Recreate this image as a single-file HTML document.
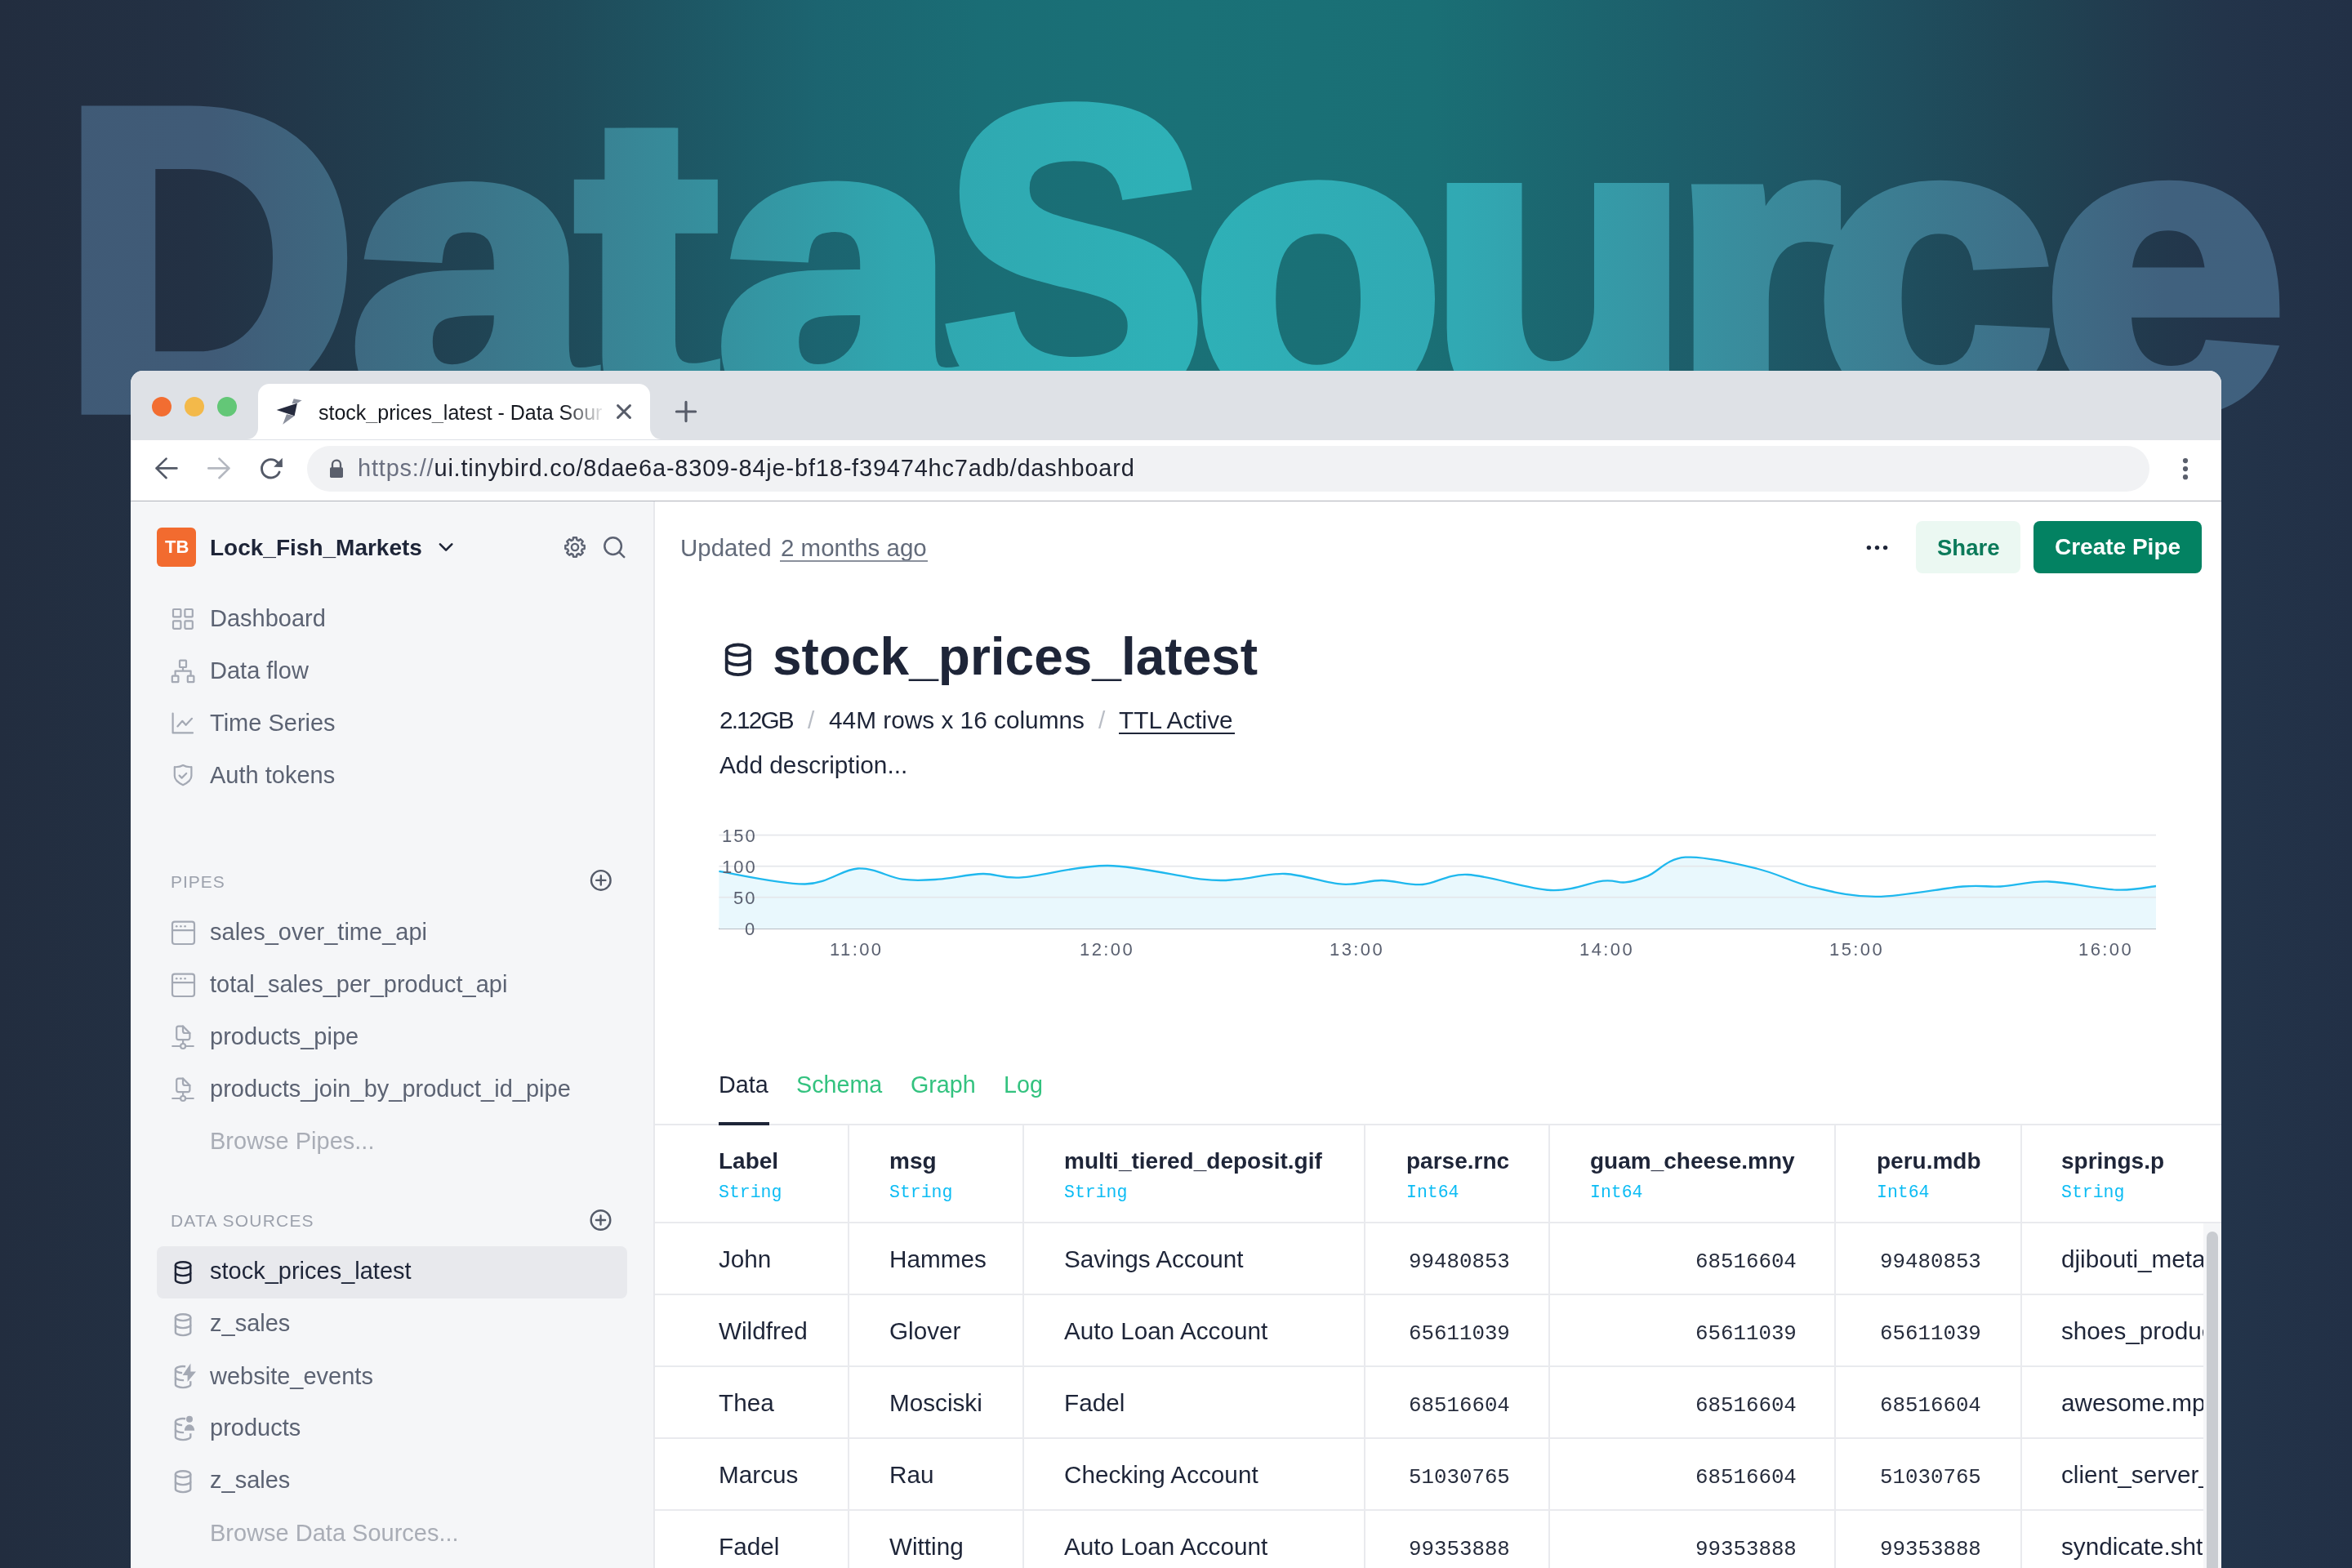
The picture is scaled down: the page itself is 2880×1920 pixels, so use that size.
<!DOCTYPE html>
<html><head><meta charset="utf-8">
<style>
html,body{margin:0;padding:0}
body{width:2880px;height:1920px;overflow:hidden;position:relative;font-family:"Liberation Sans",sans-serif;
background:linear-gradient(90deg,#222d3f 0px,#233144 240px,#213f50 500px,#1f4b5a 700px,#1c6470 1000px,#1a6d75 1200px,#1a7177 1450px,#1a6f75 1750px,#1c646e 1950px,#1e5a68 2150px,#1f4e5e 2330px,#204353 2500px,#22384c 2650px,#23344a 2720px,#223046 2880px);}
.a{position:absolute}
.t{position:absolute;white-space:pre;line-height:1;will-change:transform}
svg{position:absolute;overflow:visible}
#win{position:absolute;left:160px;top:454px;width:2560px;height:1466px;border-radius:15px 15px 0 0;overflow:hidden;background:#fff}
#inner{position:absolute;left:-160px;top:-454px;width:2880px;height:1920px}
</style></head>
<body>

<svg width="2880" height="1920" style="left:0;top:0"><defs><linearGradient id="bg1" gradientUnits="userSpaceOnUse" x1="0" y1="0" x2="2880" y2="0"><stop offset="0" stop-color="#405a76"/><stop offset="0.09" stop-color="#405b77"/><stop offset="0.24" stop-color="#3a7e90"/><stop offset="0.38" stop-color="#30a6af"/><stop offset="0.5" stop-color="#2eb1b7"/><stop offset="0.62" stop-color="#31a9b3"/><stop offset="0.75" stop-color="#3a8a9b"/><stop offset="0.92" stop-color="#40617e"/><stop offset="1" stop-color="#40607e"/></linearGradient><mask id="bm" maskUnits="userSpaceOnUse" x="0" y="0" width="2880" height="1920"><g fill="#fff" font-family="Liberation Sans" font-weight="bold" font-size="549"><text transform="translate(75.41,498.00) scale(0.9118,0.9497)" x="0" y="0" stroke="#fff" stroke-width="20.41" stroke-linejoin="miter">D</text><text transform="translate(429.04,498.00) scale(0.9611,0.9032)" x="0" y="0" stroke="#fff" stroke-width="20.38" stroke-linejoin="miter">a</text><text transform="translate(706.07,498.00) scale(0.9438,0.9267)" x="0" y="0" stroke="#fff" stroke-width="20.31" stroke-linejoin="miter">t</text><text transform="translate(877.44,498.00) scale(0.9615,0.9048)" x="0" y="0" stroke="#fff" stroke-width="20.36" stroke-linejoin="miter">a</text><text transform="translate(1154.50,498.00) scale(0.8789,0.9490)" x="0" y="0" stroke="#fff" stroke-width="20.79" stroke-linejoin="miter">S</text><text transform="translate(1460.92,498.00) scale(0.9129,0.9079)" x="0" y="0" stroke="#fff" stroke-width="20.87" stroke-linejoin="miter">o</text><text transform="translate(1748.68,498.00) scale(0.9611,0.9126)" x="0" y="0" stroke="#fff" stroke-width="20.28" stroke-linejoin="miter">u</text><text transform="translate(2046.55,498.00) scale(0.9631,0.9081)" x="0" y="0" stroke="#fff" stroke-width="20.31" stroke-linejoin="miter">r</text><text transform="translate(2222.82,498.00) scale(0.9552,0.9072)" x="0" y="0" stroke="#fff" stroke-width="20.40" stroke-linejoin="miter">c</text><text transform="translate(2501.87,498.00) scale(0.9758,0.9072)" x="0" y="0" stroke="#fff" stroke-width="20.18" stroke-linejoin="miter">e</text><rect x="740.4" y="156.6" width="89.9" height="80"/></g></mask></defs><rect x="0" y="0" width="2880" height="600" fill="url(#bg1)" mask="url(#bm)"/></svg>
<div id="win"><div id="inner">
<div class="a" style="left:160.00px;top:454.00px;width:2560.00px;height:84.50px;background:#dee1e6;"></div>
<div class="a" style="left:186px;top:486px;width:24px;height:24px;border-radius:50%;background:#f26d31"></div>
<div class="a" style="left:225.7px;top:486px;width:24px;height:24px;border-radius:50%;background:#f3b94a"></div>
<div class="a" style="left:265.8px;top:486px;width:24px;height:24px;border-radius:50%;background:#63c777"></div>
<svg width="2880" height="1920" style="left:0;top:0"><path d="M302,538 A14,14 0 0 0 316,524 L316,484 A14,14 0 0 1 330,470 L782,470 A14,14 0 0 1 796,484 L796,524 A14,14 0 0 0 810,538 Z" fill="#fff"/><polygon points="338.7,502 363.9,493.7 360.6,509.2" fill="#252a3d"/><polygon points="359.7,488.2 369.6,490.2 363.9,493.7 357.5,494.3" fill="#8a8f9c"/><polygon points="350.9,507.3 360.6,509.2 346.2,519.7" fill="#8a8f9c"/><path d="M756.6,496.6 L771.4,511.4 M771.4,496.6 L756.6,511.4" stroke="#575c69" stroke-width="3" stroke-linecap="round"/><path d="M828.4,504 L851.6,504 M840,492.4 L840,515.6" stroke="#575c69" stroke-width="3.2" stroke-linecap="round"/></svg>
<div class="t" style="left:389.80px;top:493.03px;font-size:25px;color:#15181f;font-weight:normal;font-family:'Liberation Sans',sans-serif;-webkit-mask-image:linear-gradient(90deg,#000 0px,#000 300px,rgba(0,0,0,0.05) 350px);mask-image:linear-gradient(90deg,#000 0px,#000 300px,rgba(0,0,0,0.05) 350px);">stock_prices_latest - Data Sour</div>
<div class="a" style="left:160.00px;top:538.50px;width:2560.00px;height:74.50px;background:#fff;"></div>
<div class="a" style="left:160.00px;top:612.70px;width:2560.00px;height:1.40px;background:#b0b3ba;"></div>
<div class="a" style="left:376px;top:546px;width:2256px;height:56px;border-radius:28px;background:#f1f2f4"></div>
<svg width="2880" height="1920" style="left:0;top:0"><path d="M191.5,573.4 L216.4,573.4 M203.6,561.6 L191.5,573.4 L203.6,585.2" stroke="#535967" stroke-width="2.6" fill="none" stroke-linecap="round" stroke-linejoin="round"/><path d="M255.3,573.4 L280.5,573.4 M268.4,561.6 L280.5,573.4 L268.4,585.2" stroke="#b4b8c0" stroke-width="2.6" fill="none" stroke-linecap="round" stroke-linejoin="round"/><path d="M340.15,566.45 A11.2,11.2 0 1 0 342.08,578.0" stroke="#535967" stroke-width="2.9" fill="none" stroke-linecap="round"/><polygon points="345.7,560.8 345.9,572 335.2,571.8" fill="#535967"/><rect x="404" y="572.3" width="16" height="12.6" rx="1.6" fill="#5a5f6c"/><path d="M407,573 V568.6 A5,5 0 0 1 417,568.6 V573" stroke="#5a5f6c" stroke-width="2.3" fill="none"/><circle cx="2676" cy="564.1" r="3.1" fill="#5a5f6c"/><circle cx="2676" cy="574.1" r="3.1" fill="#5a5f6c"/><circle cx="2676" cy="584.2" r="3.1" fill="#5a5f6c"/></svg>
<div class="t" style="left:438.30px;top:559.45px;font-size:29px;color:#1f2330;font-weight:normal;font-family:'Liberation Sans',sans-serif;letter-spacing:0.8px;"><span style="color:#6b7080">https://</span>ui.tinybird.co/8dae6a-8309-84je-bf18-f39474hc7adb/dashboard</div>
<div class="a" style="left:160.00px;top:614.10px;width:640.00px;height:1305.90px;background:#f5f6f8;"></div>
<div class="a" style="left:800.00px;top:614.10px;width:2.00px;height:1305.90px;background:#e7e8ec;"></div>
<div class="a" style="left:192px;top:645.7px;width:48px;height:48px;border-radius:6px;background:#f26b2f"></div>
<div class="t" style="left:201.50px;top:659.07px;font-size:22px;color:#fff;font-weight:bold;font-family:'Liberation Sans',sans-serif;">TB</div>
<div class="t" style="left:256.80px;top:657.09px;font-size:28px;color:#1e2538;font-weight:bold;font-family:'Liberation Sans',sans-serif;">Lock_Fish_Markets</div>
<div class="t" style="left:256.80px;top:743.45px;font-size:29px;color:#5c6373;font-weight:normal;font-family:'Liberation Sans',sans-serif;">Dashboard</div>
<div class="t" style="left:256.80px;top:807.45px;font-size:29px;color:#5c6373;font-weight:normal;font-family:'Liberation Sans',sans-serif;">Data flow</div>
<div class="t" style="left:256.80px;top:871.45px;font-size:29px;color:#5c6373;font-weight:normal;font-family:'Liberation Sans',sans-serif;">Time Series</div>
<div class="t" style="left:256.80px;top:935.45px;font-size:29px;color:#5c6373;font-weight:normal;font-family:'Liberation Sans',sans-serif;">Auth tokens</div>
<div class="t" style="left:208.50px;top:1068.52px;font-size:21px;color:#9ca1ac;font-weight:normal;font-family:'Liberation Sans',sans-serif;letter-spacing:1.0px;">PIPES</div>
<div class="t" style="left:256.80px;top:1127.45px;font-size:29px;color:#5c6373;font-weight:normal;font-family:'Liberation Sans',sans-serif;">sales_over_time_api</div>
<div class="t" style="left:256.80px;top:1191.45px;font-size:29px;color:#5c6373;font-weight:normal;font-family:'Liberation Sans',sans-serif;">total_sales_per_product_api</div>
<div class="t" style="left:256.80px;top:1255.45px;font-size:29px;color:#5c6373;font-weight:normal;font-family:'Liberation Sans',sans-serif;">products_pipe</div>
<div class="t" style="left:256.80px;top:1319.45px;font-size:29px;color:#5c6373;font-weight:normal;font-family:'Liberation Sans',sans-serif;">products_join_by_product_id_pipe</div>
<div class="t" style="left:256.80px;top:1383.05px;font-size:29px;color:#a9adb6;font-weight:normal;font-family:'Liberation Sans',sans-serif;">Browse Pipes...</div>
<div class="t" style="left:209.00px;top:1484.22px;font-size:21px;color:#9ca1ac;font-weight:normal;font-family:'Liberation Sans',sans-serif;letter-spacing:1.2px;">DATA SOURCES</div>
<div class="a" style="left:192px;top:1526px;width:576px;height:63.5px;border-radius:8px;background:#e8e9ed"></div>
<div class="t" style="left:256.80px;top:1542.45px;font-size:29px;color:#1e2538;font-weight:normal;font-family:'Liberation Sans',sans-serif;">stock_prices_latest</div>
<div class="t" style="left:256.80px;top:1606.45px;font-size:29px;color:#5c6373;font-weight:normal;font-family:'Liberation Sans',sans-serif;">z_sales</div>
<div class="t" style="left:256.80px;top:1671.05px;font-size:29px;color:#5c6373;font-weight:normal;font-family:'Liberation Sans',sans-serif;">website_events</div>
<div class="t" style="left:256.80px;top:1734.45px;font-size:29px;color:#5c6373;font-weight:normal;font-family:'Liberation Sans',sans-serif;">products</div>
<div class="t" style="left:256.80px;top:1798.45px;font-size:29px;color:#5c6373;font-weight:normal;font-family:'Liberation Sans',sans-serif;">z_sales</div>
<div class="t" style="left:256.80px;top:1862.95px;font-size:29px;color:#a9adb6;font-weight:normal;font-family:'Liberation Sans',sans-serif;">Browse Data Sources...</div>
<svg width="2880" height="1920" style="left:0;top:0"><path d="M538.9,666.4 L546.1,673.6 L553.3,666.4" stroke="#1e2436" stroke-width="2.6" fill="none" stroke-linecap="round" stroke-linejoin="round"/><path d="M712.89,667.62 L715.72,667.93 L715.72,672.07 L712.89,672.38 L711.97,674.60 L713.75,676.83 L710.83,679.75 L708.60,677.97 L706.38,678.89 L706.07,681.72 L701.93,681.72 L701.62,678.89 L699.40,677.97 L697.17,679.75 L694.25,676.83 L696.03,674.60 L695.11,672.38 L692.28,672.07 L692.28,667.93 L695.11,667.62 L696.03,665.40 L694.25,663.17 L697.17,660.25 L699.40,662.03 L701.62,661.11 L701.93,658.28 L706.07,658.28 L706.38,661.11 L708.60,662.03 L710.83,660.25 L713.75,663.17 L711.97,665.40 Z" stroke="#5c6272" stroke-width="2.4" fill="none" stroke-linejoin="round"/><circle cx="704" cy="670" r="4.1" stroke="#5c6272" stroke-width="2.4" fill="none"/><circle cx="750.6" cy="668.6" r="10.3" stroke="#5c6272" stroke-width="2.5" fill="none"/><path d="M758.2,676.2 L764.2,682.2" stroke="#5c6272" stroke-width="2.5" stroke-linecap="round"/><g stroke="#a4a9b4" stroke-width="2.2" fill="none" stroke-linejoin="round" stroke-linecap="round"><rect x="212" y="746" width="9.4" height="9.4" rx="1"/><rect x="226.4" y="746" width="9.4" height="9.4" rx="1"/><rect x="212" y="760.4" width="9.4" height="9.4" rx="1"/><rect x="226.4" y="760.4" width="9.4" height="9.4" rx="1"/><rect x="220" y="808.6" width="8" height="8.4" rx="0.8"/><path d="M224,817 V821.6 M214.6,826.6 V821.6 H233.6 V826.6"/><rect x="210.8" y="827.6" width="7.6" height="7.6" rx="0.8"/><rect x="229.8" y="827.6" width="7.6" height="7.6" rx="0.8"/><path d="M211.6,873.6 V897.4 H236"/><path d="M217.4,889.4 L223.3,882.8 L227.6,887.8 L235,879.8"/><path d="M213.8,939.2 Q220,939.6 224.1,937 Q228.2,939.6 234.4,939.2 V950 Q234.4,956.4 224.1,961.2 Q213.8,956.4 213.8,950 Z"/><path d="M219.6,949.6 L222.6,952.6 L228.2,947"/></g><circle cx="735.8" cy="1077.9" r="11.8" stroke="#555b69" stroke-width="2.4" fill="none"/><path d="M730.1999999999999,1077.9 H741.4 M735.8,1072.3000000000002 V1083.5" stroke="#555b69" stroke-width="2.4" stroke-linecap="round"/><g stroke="#a4a9b4" stroke-width="2.2" fill="none" stroke-linejoin="round" stroke-linecap="round"><rect x="211" y="1128.6" width="27" height="27.4" rx="3"/><path d="M211,1139.1999999999998 H238"/></g><g fill="#a4a9b4"><circle cx="216.2" cy="1134.1999999999998" r="1.3"/><circle cx="221.4" cy="1134.1999999999998" r="1.3"/><circle cx="226.6" cy="1134.1999999999998" r="1.3"/></g><g stroke="#a4a9b4" stroke-width="2.2" fill="none" stroke-linejoin="round" stroke-linecap="round"><rect x="211" y="1192.6" width="27" height="27.4" rx="3"/><path d="M211,1203.1999999999998 H238"/></g><g fill="#a4a9b4"><circle cx="216.2" cy="1198.1999999999998" r="1.3"/><circle cx="221.4" cy="1198.1999999999998" r="1.3"/><circle cx="226.6" cy="1198.1999999999998" r="1.3"/></g><g stroke="#a4a9b4" stroke-width="2.2" fill="none" stroke-linejoin="round" stroke-linecap="round"><path d="M216.2,1259.1 Q216.2,1256.6 218.7,1256.6 H224 L232.4,1265.0 V1270.6 Q232.4,1273.1999999999998 229.8,1273.1999999999998 H218.7 Q216.2,1273.1999999999998 216.2,1270.6 Z"/><path d="M224,1256.6 V1262.1999999999998 Q224,1265.0 226.8,1265.0 H232.4"/><path d="M224.1,1273.1999999999998 V1278.0 M211.2,1281.0 H221 M227.2,1281.0 H236.8"/><circle cx="224.1" cy="1281.0" r="3"/></g><g stroke="#a4a9b4" stroke-width="2.2" fill="none" stroke-linejoin="round" stroke-linecap="round"><path d="M216.2,1323.1 Q216.2,1320.6 218.7,1320.6 H224 L232.4,1329.0 V1334.6 Q232.4,1337.1999999999998 229.8,1337.1999999999998 H218.7 Q216.2,1337.1999999999998 216.2,1334.6 Z"/><path d="M224,1320.6 V1326.1999999999998 Q224,1329.0 226.8,1329.0 H232.4"/><path d="M224.1,1337.1999999999998 V1342.0 M211.2,1345.0 H221 M227.2,1345.0 H236.8"/><circle cx="224.1" cy="1345.0" r="3"/></g><circle cx="735.5" cy="1494" r="11.8" stroke="#555b69" stroke-width="2.4" fill="none"/><path d="M729.9,1494 H741.1 M735.5,1488.4 V1499.6" stroke="#555b69" stroke-width="2.4" stroke-linecap="round"/><g stroke="#1e2436" stroke-width="2.4" fill="none"><ellipse cx="224.1" cy="1549.2" rx="9.2" ry="3.9"/><path d="M214.9,1549.2 V1567.2 A9.2,3.9 0 0 0 233.29999999999998,1567.2 V1549.2"/><path d="M214.9,1558.2 A9.2,3.9 0 0 0 233.29999999999998,1558.2"/></g><g stroke="#a4a9b4" stroke-width="2.4" fill="none"><ellipse cx="224.1" cy="1613.2" rx="9.2" ry="3.9"/><path d="M214.9,1613.2 V1631.2 A9.2,3.9 0 0 0 233.29999999999998,1631.2 V1613.2"/><path d="M214.9,1622.2 A9.2,3.9 0 0 0 233.29999999999998,1622.2"/></g><g stroke="#a4a9b4" stroke-width="2.4" fill="none"><path d="M227.1,1673.3 A9.2,3.9 0 0 0 214.9,1677.2 A9.2,3.9 0 0 0 223.1,1681.1000000000001"/><path d="M214.9,1677.2 V1695.2 A9.2,3.9 0 0 0 233.29999999999998,1695.2 V1691.2"/><path d="M214.9,1686.2 A9.2,3.9 0 0 0 225.1,1690.1000000000001"/></g><polygon points="233.4,1669.6 233.4,1679.6 240,1679.6 229.6,1692 229.6,1684 223.6,1684" fill="#a4a9b4"/><g stroke="#a4a9b4" stroke-width="2.4" fill="none"><path d="M227.1,1737.3 A9.2,3.9 0 0 0 214.9,1741.2 A9.2,3.9 0 0 0 223.1,1745.1000000000001"/><path d="M214.9,1741.2 V1759.2 A9.2,3.9 0 0 0 233.29999999999998,1759.2 V1755.2"/><path d="M214.9,1750.2 A9.2,3.9 0 0 0 225.1,1754.1000000000001"/></g><circle cx="232" cy="1737.8" r="4" fill="#a4a9b4"/><path d="M225.8,1751.8 A6.2,7.6 0 0 1 238.2,1751.8 Z" fill="#a4a9b4"/><g stroke="#a4a9b4" stroke-width="2.4" fill="none"><ellipse cx="224.1" cy="1805.2" rx="9.2" ry="3.9"/><path d="M214.9,1805.2 V1823.2 A9.2,3.9 0 0 0 233.29999999999998,1823.2 V1805.2"/><path d="M214.9,1814.2 A9.2,3.9 0 0 0 233.29999999999998,1814.2"/></g></svg>
<div class="t" style="left:833.00px;top:655.62px;font-size:29.5px;color:#636b7a;font-weight:normal;font-family:'Liberation Sans',sans-serif;">Updated </div>
<div class="t" style="left:955.80px;top:655.62px;font-size:29.5px;color:#636b7a;font-weight:normal;font-family:'Liberation Sans',sans-serif;">2 months ago</div>
<div class="a" style="left:954.80px;top:685.80px;width:180.90px;height:1.80px;background:#8a909c;"></div>
<div class="a" style="left:2346.3px;top:638px;width:127.5px;height:64px;border-radius:8px;background:#ebf8f2"></div>
<div class="t" style="left:2371.80px;top:656.92px;font-size:27.5px;color:#0b7a5a;font-weight:bold;font-family:'Liberation Sans',sans-serif;">Share</div>
<div class="a" style="left:2490.2px;top:638px;width:205.8px;height:64px;border-radius:8px;background:#038262"></div>
<div class="t" style="left:2515.70px;top:656.49px;font-size:28px;color:#fff;font-weight:bold;font-family:'Liberation Sans',sans-serif;">Create Pipe</div>
<div class="t" style="left:946.00px;top:771.81px;font-size:64px;color:#1e2538;font-weight:bold;font-family:'Liberation Sans',sans-serif;">stock_prices_latest</div>
<div class="t" style="left:881.00px;top:866.57px;font-size:29.8px;color:#1e2538;font-weight:normal;font-family:'Liberation Sans',sans-serif;letter-spacing:-1.9px;">2.12GB</div>
<div class="t" style="left:989.00px;top:866.57px;font-size:29.8px;color:#b9bdc5;font-weight:normal;font-family:'Liberation Sans',sans-serif;">/</div>
<div class="t" style="left:1015.00px;top:866.57px;font-size:29.8px;color:#1e2538;font-weight:normal;font-family:'Liberation Sans',sans-serif;">44M rows x 16 columns</div>
<div class="t" style="left:1345.00px;top:866.57px;font-size:29.8px;color:#b9bdc5;font-weight:normal;font-family:'Liberation Sans',sans-serif;">/</div>
<div class="t" style="left:1370.40px;top:866.57px;font-size:29.8px;color:#1e2538;font-weight:normal;font-family:'Liberation Sans',sans-serif;">TTL Active</div>
<div class="a" style="left:1370.40px;top:897.20px;width:141.20px;height:1.80px;background:#1e2538;"></div>
<div class="t" style="left:881.00px;top:922.37px;font-size:29.8px;color:#1e2538;font-weight:normal;font-family:'Liberation Sans',sans-serif;">Add description...</div>
<div class="a" style="left:880.40px;top:1136.00px;width:1759.60px;height:2.00px;background:#b8bcc4;"></div>
<svg width="2880" height="1920" style="left:0;top:0"><circle cx="2288.4" cy="670.6" r="2.7" fill="#1e2538"/><circle cx="2298.5" cy="670.6" r="2.7" fill="#1e2538"/><circle cx="2308.6" cy="670.6" r="2.7" fill="#1e2538"/><g stroke="#1e2538" stroke-width="3.8" fill="none"><ellipse cx="903.8" cy="795.9" rx="14.1" ry="6.4"/><path d="M889.6999999999999,795.9 V819.7 A14.1,6.4 0 0 0 917.9,819.7 V795.9"/><path d="M889.6999999999999,807.8 A14.1,6.4 0 0 0 917.9,807.8"/></g><path d="M880.4,1066.9 C898.0,1069.5 957.5,1083.1 985.9,1082.5 C1014.2,1081.9 1030.7,1064.5 1050.5,1063.5 C1070.3,1062.5 1088.6,1074.5 1105.0,1076.7 C1121.4,1078.9 1132.6,1077.8 1149.0,1076.7 C1165.4,1075.6 1186.5,1070.4 1203.5,1070.0 C1220.5,1069.6 1225.5,1076.1 1251.0,1074.4 C1276.5,1072.7 1319.8,1059.6 1356.6,1060.0 C1393.4,1060.4 1445.3,1073.9 1472.0,1076.7 C1498.7,1079.5 1499.5,1077.8 1516.5,1076.7 C1533.5,1075.6 1552.8,1069.0 1574.0,1070.0 C1595.2,1071.0 1624.0,1081.4 1643.6,1082.7 C1663.2,1084.0 1675.4,1078.0 1691.8,1078.0 C1708.2,1078.0 1724.4,1084.2 1742.0,1083.0 C1759.6,1081.8 1771.3,1069.8 1797.4,1071.0 C1823.5,1072.2 1870.9,1088.7 1898.4,1090.0 C1926.0,1091.3 1947.4,1080.2 1962.7,1078.6 C1978.0,1077.0 1980.8,1081.4 1990.0,1080.4 C1999.2,1079.4 2005.5,1077.7 2017.8,1072.6 C2030.1,1067.5 2041.5,1051.2 2063.7,1049.7 C2085.9,1048.2 2125.0,1057.4 2151.0,1063.5 C2177.0,1069.6 2195.3,1080.7 2219.8,1086.4 C2244.3,1092.1 2267.3,1098.1 2297.9,1097.9 C2328.5,1097.8 2378.2,1087.6 2403.5,1085.5 C2428.8,1083.4 2431.8,1086.5 2449.4,1085.5 C2467.0,1084.5 2485.3,1078.8 2509.0,1079.5 C2532.7,1080.2 2569.9,1088.7 2591.7,1089.6 C2613.5,1090.5 2631.9,1085.8 2640.0,1085.0 L2640,1137 L880.4,1137 Z" fill="#e9f8fd"/><rect x="880.4" y="1021.7" width="1759.6" height="1.8" fill="#e3e5ea" fill-opacity="0.9"/><rect x="880.4" y="1059.8" width="1759.6" height="1.8" fill="#e3e5ea" fill-opacity="0.9"/><rect x="880.4" y="1097.8999999999999" width="1759.6" height="1.8" fill="#e3e5ea" fill-opacity="0.9"/><path d="M880.4,1066.9 C898.0,1069.5 957.5,1083.1 985.9,1082.5 C1014.2,1081.9 1030.7,1064.5 1050.5,1063.5 C1070.3,1062.5 1088.6,1074.5 1105.0,1076.7 C1121.4,1078.9 1132.6,1077.8 1149.0,1076.7 C1165.4,1075.6 1186.5,1070.4 1203.5,1070.0 C1220.5,1069.6 1225.5,1076.1 1251.0,1074.4 C1276.5,1072.7 1319.8,1059.6 1356.6,1060.0 C1393.4,1060.4 1445.3,1073.9 1472.0,1076.7 C1498.7,1079.5 1499.5,1077.8 1516.5,1076.7 C1533.5,1075.6 1552.8,1069.0 1574.0,1070.0 C1595.2,1071.0 1624.0,1081.4 1643.6,1082.7 C1663.2,1084.0 1675.4,1078.0 1691.8,1078.0 C1708.2,1078.0 1724.4,1084.2 1742.0,1083.0 C1759.6,1081.8 1771.3,1069.8 1797.4,1071.0 C1823.5,1072.2 1870.9,1088.7 1898.4,1090.0 C1926.0,1091.3 1947.4,1080.2 1962.7,1078.6 C1978.0,1077.0 1980.8,1081.4 1990.0,1080.4 C1999.2,1079.4 2005.5,1077.7 2017.8,1072.6 C2030.1,1067.5 2041.5,1051.2 2063.7,1049.7 C2085.9,1048.2 2125.0,1057.4 2151.0,1063.5 C2177.0,1069.6 2195.3,1080.7 2219.8,1086.4 C2244.3,1092.1 2267.3,1098.1 2297.9,1097.9 C2328.5,1097.8 2378.2,1087.6 2403.5,1085.5 C2428.8,1083.4 2431.8,1086.5 2449.4,1085.5 C2467.0,1084.5 2485.3,1078.8 2509.0,1079.5 C2532.7,1080.2 2569.9,1088.7 2591.7,1089.6 C2613.5,1090.5 2631.9,1085.8 2640.0,1085.0" stroke="#1fb8ee" stroke-width="2.3" fill="none"/></svg>
<div class="t" style="right:1953.40px;top:1012.87px;font-size:22px;color:#5a6070;font-weight:normal;font-family:'Liberation Sans',sans-serif;letter-spacing:2px;">150</div>
<div class="t" style="right:1953.40px;top:1051.37px;font-size:22px;color:#5a6070;font-weight:normal;font-family:'Liberation Sans',sans-serif;letter-spacing:2px;">100</div>
<div class="t" style="right:1953.40px;top:1088.67px;font-size:22px;color:#5a6070;font-weight:normal;font-family:'Liberation Sans',sans-serif;letter-spacing:2px;">50</div>
<div class="t" style="right:1953.40px;top:1126.77px;font-size:22px;color:#5a6070;font-weight:normal;font-family:'Liberation Sans',sans-serif;letter-spacing:2px;">0</div>
<div class="t" style="left:1016.30px;top:1152.37px;font-size:22px;color:#5a6070;font-weight:normal;font-family:'Liberation Sans',sans-serif;letter-spacing:2.4px;">11:00</div>
<div class="t" style="left:1321.50px;top:1152.37px;font-size:22px;color:#5a6070;font-weight:normal;font-family:'Liberation Sans',sans-serif;letter-spacing:2.4px;">12:00</div>
<div class="t" style="left:1627.50px;top:1152.37px;font-size:22px;color:#5a6070;font-weight:normal;font-family:'Liberation Sans',sans-serif;letter-spacing:2.4px;">13:00</div>
<div class="t" style="left:1933.50px;top:1152.37px;font-size:22px;color:#5a6070;font-weight:normal;font-family:'Liberation Sans',sans-serif;letter-spacing:2.4px;">14:00</div>
<div class="t" style="left:2239.50px;top:1152.37px;font-size:22px;color:#5a6070;font-weight:normal;font-family:'Liberation Sans',sans-serif;letter-spacing:2.4px;">15:00</div>
<div class="t" style="left:2544.50px;top:1152.37px;font-size:22px;color:#5a6070;font-weight:normal;font-family:'Liberation Sans',sans-serif;letter-spacing:2.4px;">16:00</div>
<div class="t" style="left:880.40px;top:1314.20px;font-size:28.7px;color:#1e2538;font-weight:normal;font-family:'Liberation Sans',sans-serif;">Data</div>
<div class="t" style="left:974.90px;top:1314.20px;font-size:28.7px;color:#33c27f;font-weight:normal;font-family:'Liberation Sans',sans-serif;">Schema</div>
<div class="t" style="left:1114.60px;top:1314.20px;font-size:28.7px;color:#33c27f;font-weight:normal;font-family:'Liberation Sans',sans-serif;">Graph</div>
<div class="t" style="left:1228.60px;top:1314.20px;font-size:28.7px;color:#33c27f;font-weight:normal;font-family:'Liberation Sans',sans-serif;">Log</div>
<div class="a" style="left:802.00px;top:1375.80px;width:1918.00px;height:2.00px;background:#e8e9ed;"></div>
<div class="a" style="left:880.00px;top:1373.80px;width:62.00px;height:4.20px;background:#1e2538;"></div>
<svg width="2880" height="1920" style="left:0;top:0"></svg>
<div class="a" style="left:802.00px;top:1496.00px;width:1918.00px;height:2.00px;background:#e9eaee;"></div>
<div class="a" style="left:802.00px;top:1584.00px;width:1896.00px;height:2.00px;background:#e9eaee;"></div>
<div class="a" style="left:802.00px;top:1672.00px;width:1896.00px;height:2.00px;background:#e9eaee;"></div>
<div class="a" style="left:802.00px;top:1760.00px;width:1896.00px;height:2.00px;background:#e9eaee;"></div>
<div class="a" style="left:802.00px;top:1848.00px;width:1896.00px;height:2.00px;background:#e9eaee;"></div>
<div class="a" style="left:1037.80px;top:1378.00px;width:2.00px;height:542.00px;background:#e9eaee;"></div>
<div class="a" style="left:1251.70px;top:1378.00px;width:2.00px;height:542.00px;background:#e9eaee;"></div>
<div class="a" style="left:1670.40px;top:1378.00px;width:2.00px;height:542.00px;background:#e9eaee;"></div>
<div class="a" style="left:1895.60px;top:1378.00px;width:2.00px;height:542.00px;background:#e9eaee;"></div>
<div class="a" style="left:2245.70px;top:1378.00px;width:2.00px;height:542.00px;background:#e9eaee;"></div>
<div class="a" style="left:2473.80px;top:1378.00px;width:2.00px;height:542.00px;background:#e9eaee;"></div>
<div class="t" style="left:880.40px;top:1408.29px;font-size:28px;color:#1e2538;font-weight:bold;font-family:'Liberation Sans',sans-serif;">Label</div>
<div class="t" style="left:880.40px;top:1449.53px;font-size:21.5px;color:#0cbcf4;font-weight:normal;font-family:'Liberation Mono',monospace;">String</div>
<div class="t" style="left:1089.00px;top:1408.29px;font-size:28px;color:#1e2538;font-weight:bold;font-family:'Liberation Sans',sans-serif;">msg</div>
<div class="t" style="left:1089.00px;top:1449.53px;font-size:21.5px;color:#0cbcf4;font-weight:normal;font-family:'Liberation Mono',monospace;">String</div>
<div class="t" style="left:1302.50px;top:1408.29px;font-size:28px;color:#1e2538;font-weight:bold;font-family:'Liberation Sans',sans-serif;">multi_tiered_deposit.gif</div>
<div class="t" style="left:1302.50px;top:1449.53px;font-size:21.5px;color:#0cbcf4;font-weight:normal;font-family:'Liberation Mono',monospace;">String</div>
<div class="t" style="left:1721.70px;top:1408.29px;font-size:28px;color:#1e2538;font-weight:bold;font-family:'Liberation Sans',sans-serif;">parse.rnc</div>
<div class="t" style="left:1721.70px;top:1449.53px;font-size:21.5px;color:#0cbcf4;font-weight:normal;font-family:'Liberation Mono',monospace;">Int64</div>
<div class="t" style="left:1947.00px;top:1408.29px;font-size:28px;color:#1e2538;font-weight:bold;font-family:'Liberation Sans',sans-serif;">guam_cheese.mny</div>
<div class="t" style="left:1947.00px;top:1449.53px;font-size:21.5px;color:#0cbcf4;font-weight:normal;font-family:'Liberation Mono',monospace;">Int64</div>
<div class="t" style="left:2297.70px;top:1408.29px;font-size:28px;color:#1e2538;font-weight:bold;font-family:'Liberation Sans',sans-serif;">peru.mdb</div>
<div class="t" style="left:2297.70px;top:1449.53px;font-size:21.5px;color:#0cbcf4;font-weight:normal;font-family:'Liberation Mono',monospace;">Int64</div>
<div class="t" style="left:2524.30px;top:1408.29px;font-size:28px;color:#1e2538;font-weight:bold;font-family:'Liberation Sans',sans-serif;">springs.p</div>
<div class="t" style="left:2524.30px;top:1449.53px;font-size:21.5px;color:#0cbcf4;font-weight:normal;font-family:'Liberation Mono',monospace;">String</div>
<div class="a" style="left:802px;top:1378px;width:1896px;height:542px;overflow:hidden"><div class="a" style="left:-802px;top:-1378px;width:2880px;height:1920px">
<div class="t" style="left:880.40px;top:1527.35px;font-size:29.7px;color:#1e2538;font-weight:normal;font-family:'Liberation Sans',sans-serif;">John</div>
<div class="t" style="left:1089.00px;top:1527.35px;font-size:29.7px;color:#1e2538;font-weight:normal;font-family:'Liberation Sans',sans-serif;">Hammes</div>
<div class="t" style="left:1302.50px;top:1527.35px;font-size:29.7px;color:#1e2538;font-weight:normal;font-family:'Liberation Sans',sans-serif;">Savings Account</div>
<div class="t" style="right:1031.00px;top:1532.73px;font-size:25.8px;color:#262c3c;font-weight:normal;font-family:'Liberation Mono',monospace;">99480853</div>
<div class="t" style="right:680.60px;top:1532.73px;font-size:25.8px;color:#262c3c;font-weight:normal;font-family:'Liberation Mono',monospace;">68516604</div>
<div class="t" style="right:454.00px;top:1532.73px;font-size:25.8px;color:#262c3c;font-weight:normal;font-family:'Liberation Mono',monospace;">99480853</div>
<div class="t" style="left:2524.30px;top:1527.35px;font-size:29.7px;color:#1e2538;font-weight:normal;font-family:'Liberation Sans',sans-serif;">djibouti_meta_data</div>
<div class="t" style="left:880.40px;top:1615.35px;font-size:29.7px;color:#1e2538;font-weight:normal;font-family:'Liberation Sans',sans-serif;">Wildfred</div>
<div class="t" style="left:1089.00px;top:1615.35px;font-size:29.7px;color:#1e2538;font-weight:normal;font-family:'Liberation Sans',sans-serif;">Glover</div>
<div class="t" style="left:1302.50px;top:1615.35px;font-size:29.7px;color:#1e2538;font-weight:normal;font-family:'Liberation Sans',sans-serif;">Auto Loan Account</div>
<div class="t" style="right:1031.00px;top:1620.73px;font-size:25.8px;color:#262c3c;font-weight:normal;font-family:'Liberation Mono',monospace;">65611039</div>
<div class="t" style="right:680.60px;top:1620.73px;font-size:25.8px;color:#262c3c;font-weight:normal;font-family:'Liberation Mono',monospace;">65611039</div>
<div class="t" style="right:454.00px;top:1620.73px;font-size:25.8px;color:#262c3c;font-weight:normal;font-family:'Liberation Mono',monospace;">65611039</div>
<div class="t" style="left:2524.30px;top:1615.35px;font-size:29.7px;color:#1e2538;font-weight:normal;font-family:'Liberation Sans',sans-serif;">shoes_product_data</div>
<div class="t" style="left:880.40px;top:1703.35px;font-size:29.7px;color:#1e2538;font-weight:normal;font-family:'Liberation Sans',sans-serif;">Thea</div>
<div class="t" style="left:1089.00px;top:1703.35px;font-size:29.7px;color:#1e2538;font-weight:normal;font-family:'Liberation Sans',sans-serif;">Mosciski</div>
<div class="t" style="left:1302.50px;top:1703.35px;font-size:29.7px;color:#1e2538;font-weight:normal;font-family:'Liberation Sans',sans-serif;">Fadel</div>
<div class="t" style="right:1031.00px;top:1708.73px;font-size:25.8px;color:#262c3c;font-weight:normal;font-family:'Liberation Mono',monospace;">68516604</div>
<div class="t" style="right:680.60px;top:1708.73px;font-size:25.8px;color:#262c3c;font-weight:normal;font-family:'Liberation Mono',monospace;">68516604</div>
<div class="t" style="right:454.00px;top:1708.73px;font-size:25.8px;color:#262c3c;font-weight:normal;font-family:'Liberation Mono',monospace;">68516604</div>
<div class="t" style="left:2524.30px;top:1703.35px;font-size:29.7px;color:#1e2538;font-weight:normal;font-family:'Liberation Sans',sans-serif;">awesome.mp3</div>
<div class="t" style="left:880.40px;top:1791.35px;font-size:29.7px;color:#1e2538;font-weight:normal;font-family:'Liberation Sans',sans-serif;">Marcus</div>
<div class="t" style="left:1089.00px;top:1791.35px;font-size:29.7px;color:#1e2538;font-weight:normal;font-family:'Liberation Sans',sans-serif;">Rau</div>
<div class="t" style="left:1302.50px;top:1791.35px;font-size:29.7px;color:#1e2538;font-weight:normal;font-family:'Liberation Sans',sans-serif;">Checking Account</div>
<div class="t" style="right:1031.00px;top:1796.73px;font-size:25.8px;color:#262c3c;font-weight:normal;font-family:'Liberation Mono',monospace;">51030765</div>
<div class="t" style="right:680.60px;top:1796.73px;font-size:25.8px;color:#262c3c;font-weight:normal;font-family:'Liberation Mono',monospace;">68516604</div>
<div class="t" style="right:454.00px;top:1796.73px;font-size:25.8px;color:#262c3c;font-weight:normal;font-family:'Liberation Mono',monospace;">51030765</div>
<div class="t" style="left:2524.30px;top:1791.35px;font-size:29.7px;color:#1e2538;font-weight:normal;font-family:'Liberation Sans',sans-serif;">client_server_data</div>
<div class="t" style="left:880.40px;top:1879.35px;font-size:29.7px;color:#1e2538;font-weight:normal;font-family:'Liberation Sans',sans-serif;">Fadel</div>
<div class="t" style="left:1089.00px;top:1879.35px;font-size:29.7px;color:#1e2538;font-weight:normal;font-family:'Liberation Sans',sans-serif;">Witting</div>
<div class="t" style="left:1302.50px;top:1879.35px;font-size:29.7px;color:#1e2538;font-weight:normal;font-family:'Liberation Sans',sans-serif;">Auto Loan Account</div>
<div class="t" style="right:1031.00px;top:1884.73px;font-size:25.8px;color:#262c3c;font-weight:normal;font-family:'Liberation Mono',monospace;">99353888</div>
<div class="t" style="right:680.60px;top:1884.73px;font-size:25.8px;color:#262c3c;font-weight:normal;font-family:'Liberation Mono',monospace;">99353888</div>
<div class="t" style="right:454.00px;top:1884.73px;font-size:25.8px;color:#262c3c;font-weight:normal;font-family:'Liberation Mono',monospace;">99353888</div>
<div class="t" style="left:2524.30px;top:1879.35px;font-size:29.7px;color:#1e2538;font-weight:normal;font-family:'Liberation Sans',sans-serif;">syndicate.shtml</div>
</div></div>
<div class="a" style="left:2698.00px;top:1498.00px;width:22.00px;height:422.00px;background:#f5f6f8;"></div>
<div class="a" style="left:2702px;top:1508px;width:14px;height:420px;border-radius:7px;background:#c9ccd1"></div>
</div></div>
</body></html>
